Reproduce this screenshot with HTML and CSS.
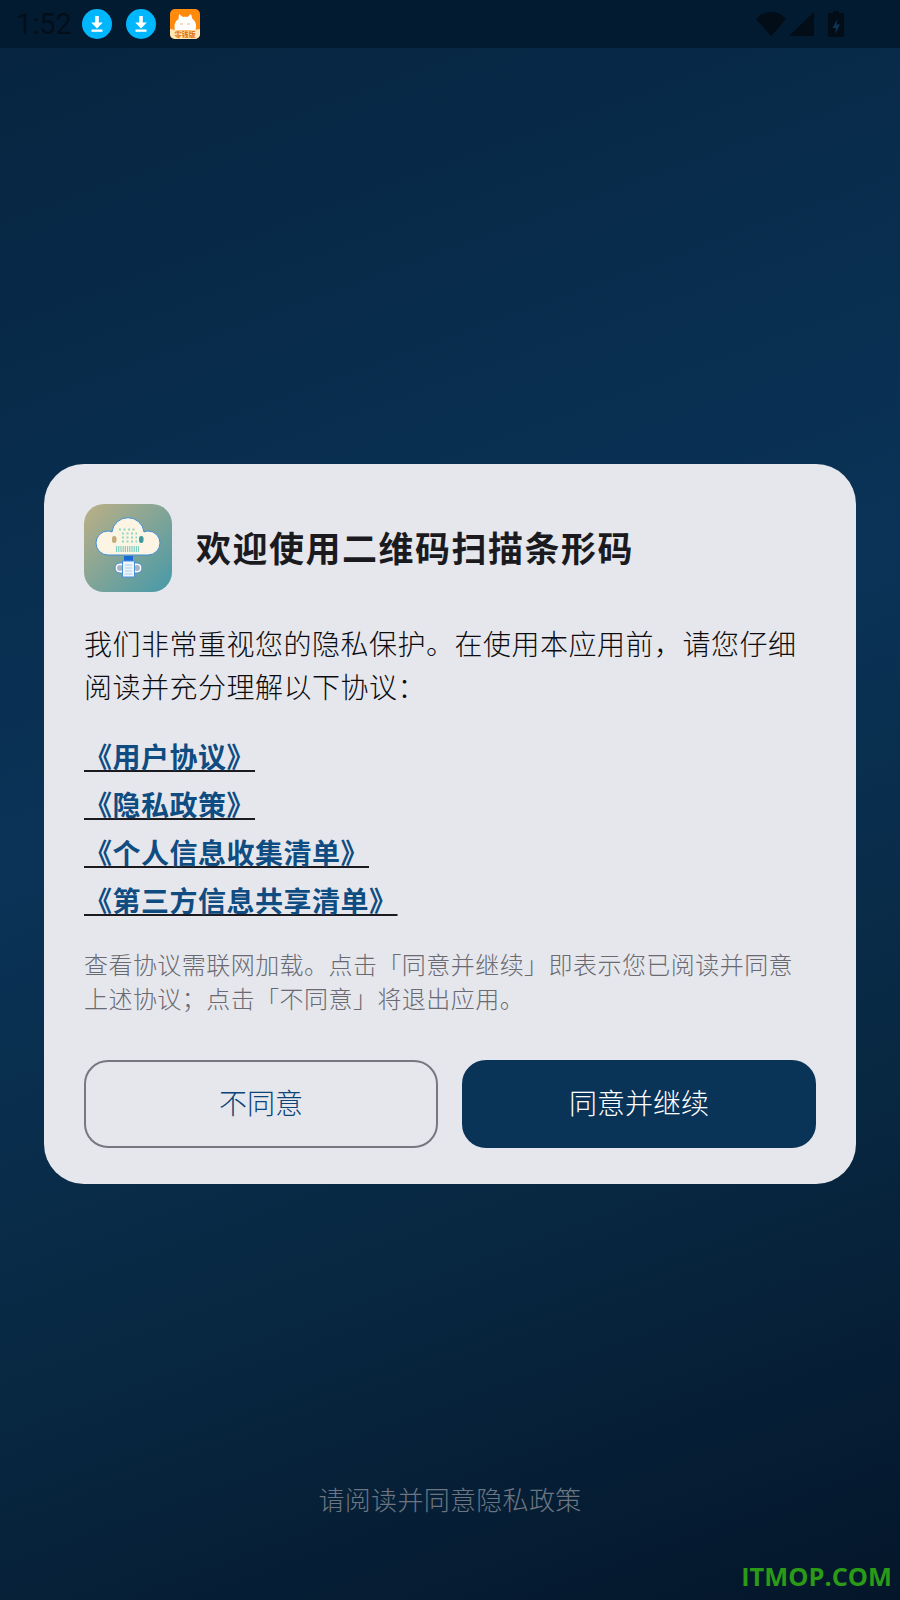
FILE: index.html
```html
<!DOCTYPE html>
<html lang="zh">
<head>
<meta charset="utf-8">
<title>隐私政策</title>
<link rel="stylesheet" href="styles.css">
</head>
<body>
<div class="screen">
  <header class="status">
    <div class="status-left">
      <span class="clock">1:52</span>
      <svg class="dl" viewBox="0 0 30 30"><circle cx="15" cy="15" r="15" fill="#00b6fd"/><path d="M13.200 7h3.600v6.500h4L15 19.500 9.200 13.500h4z" fill="#fff"/><rect x="9.500" y="20.500" width="11" height="2.300" fill="#fff"/></svg>
      <svg class="dl" viewBox="0 0 30 30"><circle cx="15" cy="15" r="15" fill="#00b6fd"/><path d="M13.200 7h3.600v6.500h4L15 19.500 9.200 13.500h4z" fill="#fff"/><rect x="9.500" y="20.500" width="11" height="2.300" fill="#fff"/></svg>
      <svg class="app-mini" viewBox="0 0 30 30"><rect width="30" height="30" rx="5" fill="#ff8a0c"/><path d="M5 21c-1.500-5 .5-9 3.500-11L9 5l4 3c1.500-.4 3-.4 4.500 0L21 5l1.500 5c3 2 4.500 6 3 11z" fill="#fff"/><path d="M10 15h3M17 15h3" stroke="#f4b870"/><path d="M0 20q15 3 30 0v5a5 5 0 0 1-5 5H5a5 5 0 0 1-5-5z" fill="#ffe6b4"/><text class="mini-text" x="15" y="27.500">零钱版</text></svg>
    </div>
    <div class="status-right">
      <svg class="wifi" viewBox="0 0 30 24"><path d="M0 7C4 2.500 9 0 15 0s11 2.500 15 7L15 24z" fill="#020d18"/></svg>
      <svg class="signal" viewBox="0 0 25 24"><path d="M25 0v24H0z" fill="#020d18"/></svg>
      <svg class="battery" viewBox="0 0 16 26"><path d="M5 0h6v2h3a2 2 0 0 1 2 2v20a2 2 0 0 1-2 2H2a2 2 0 0 1-2-2V4a2 2 0 0 1 2-2h3z" fill="#020d18"/><path d="M9.500 8l-5 9H8l-1 6 5-9.500H8.500z" fill="#0d3556"/></svg>
    </div>
  </header>

  <main class="center">
    <section class="card">
      <div class="head">
        <svg class="logo" viewBox="0 0 88 88">
          <defs>
            <linearGradient id="lg" x1="0" y1="0" x2="1" y2="1"><stop offset="0" stop-color="#bdb085"/><stop offset="1" stop-color="#4599a9"/></linearGradient>
          </defs>
          <rect width="88" height="88" rx="20" fill="url(#lg)"/>
          <path d="M24 51A12 12 0 0 1 24 27Q26 27 28 28A16.100 16.100 0 0 1 60 28Q62 27 64 27A12 12 0 0 1 64 51Z" fill="#fdf5e4" stroke="#3f8fd8" stroke-width="1"/>
          <rect x="28" y="32" width="4.500" height="7" rx="2.200" fill="#c4ab7a"/>
          <rect x="55" y="32" width="4.500" height="7" rx="2.200" fill="#3c9a9e"/>
          <path d="M35 25.500h18M38 29.500h15M38 33.500h15M38 37.500h15" stroke="#8fd8c4" stroke-width="2" stroke-dasharray="2 2.500"/>
          <path d="M32 45h23" stroke="#7fcfc0" stroke-width="6" stroke-dasharray="1.200 1"/>
          <rect x="40" y="52" width="9" height="5" fill="#1769d8"/>
          <rect x="31" y="59" width="27" height="10" rx="5" fill="#fff" stroke="#4a90d8"/>
          <circle cx="36" cy="64" r="3" fill="#a9b6c2"/>
          <circle cx="53" cy="64" r="3" fill="#a9b6c2"/>
          <path d="M38.500 57h12v16h-12z" fill="#eef6fd" stroke="#4a90d8"/>
          <path d="M41 61h7M41 64h7M41 67h7M41 70h7" stroke="#a8cdee"/>
        </svg>
        <h1 class="title">欢迎使用二维码扫描条形码</h1>
      </div>
      <p class="intro">我们非常重视您的隐私保护。在使用本应用前，请您仔细阅读并充分理解以下协议：</p>
      <ul class="links">
        <li><a class="link">《用户协议》</a></li>
        <li><a class="link">《隐私政策》</a></li>
        <li><a class="link">《个人信息收集清单》</a></li>
        <li><a class="link">《第三方信息共享清单》</a></li>
      </ul>
      <p class="note">查看协议需联网加载。点击「同意并继续」即表示您已阅读并同意上述协议；点击「不同意」将退出应用。</p>
      <div class="actions">
        <button class="btn btn-ghost">不同意</button>
        <button class="btn btn-solid">同意并继续</button>
      </div>
    </section>
  </main>

  <p class="hint">请阅读并同意隐私政策</p>
  <div class="mark">ITMOP.COM</div>
</div>
</body>
</html>
```

FILE: styles.css
```css
* { box-sizing: border-box; }
html, body { margin: 0; padding: 0; }
body { width: 900px; height: 1600px; overflow: hidden; font-family: "Noto Sans CJK SC", "Noto Sans", sans-serif; }
.screen { position: relative; width: 900px; height: 1600px; display: flex; flex-direction: column; background: linear-gradient(160deg, #06243f 0%, #0a3357 45%, #082842 72%, #04162a 100%); }
.status { height: 48px; flex: none; display: flex; justify-content: space-between; align-items: center; background: #031b30; padding: 0 56px 0 16px; }
.status-left { display: flex; align-items: center; }
.clock { font-family: Roboto, sans-serif; font-size: 29px; color: #020f1b; width: 66px; }
.dl { width: 30px; height: 30px; margin-right: 14px; }
.app-mini { width: 30px; height: 30px; }
.mini-text { font-size: 7px; font-weight: 700; fill: #e0700a; text-anchor: middle; }
.status-right { display: flex; align-items: center; }
.wifi { width: 30px; height: 24px; margin-right: 3px; }
.signal { width: 25px; height: 24px; margin-right: 14px; }
.battery { width: 16px; height: 26px; }
.center { padding: 416px 44px 0; flex: none; }
.card { background: #e6e7ed; border-radius: 40px; padding: 40px; height: 720px; }
.head { display: flex; align-items: center; gap: 24px; }
.logo { width: 88px; height: 88px; flex: none; }
.title { margin: 0; font-size: 35px; font-weight: 700; letter-spacing: 1.500px; color: #1b1b1f; line-height: 86px; height: 88px; }
.intro { margin: 30px 0 0; font-size: 28px; font-weight: 300; line-height: 43px; color: #0c0c10; letter-spacing: 0.5px; }
.links { list-style: none; margin: 24px 0 0; padding: 0; }
.links li { height: 48px; line-height: 48px; }
.link { font-size: 28px; font-weight: 700; letter-spacing: 0.5px; color: #0f4c81; text-decoration: underline; text-decoration-color: #1b1b1f; text-decoration-thickness: 1.500px; text-underline-offset: 2px; }
.note { margin: 23px 0 0; font-size: 24px; font-weight: 300; line-height: 34px; color: #696a72; letter-spacing: 0.45px; }
.actions { display: flex; gap: 24px; margin-top: 45px; }
.btn { flex: 1; height: 88px; padding: 0 0 5px; border-radius: 24px; font-family: inherit; font-size: 28px; font-weight: 300; }
.btn-ghost { background: transparent; border: 2px solid #76777f; color: #0a4478; }
.btn-solid { background: #0a3358; border: 2px solid #0a3358; color: #fff; }
.hint { margin: 0; padding-top: 296px; text-align: center; font-size: 26px; font-weight: 300; letter-spacing: 0.3px; color: #6c7682; }
.mark { position: absolute; right: 8px; bottom: 7px; font-family: "Open Sans", sans-serif; font-weight: 700; font-size: 25.400px; color: #2a9a17; }
```
